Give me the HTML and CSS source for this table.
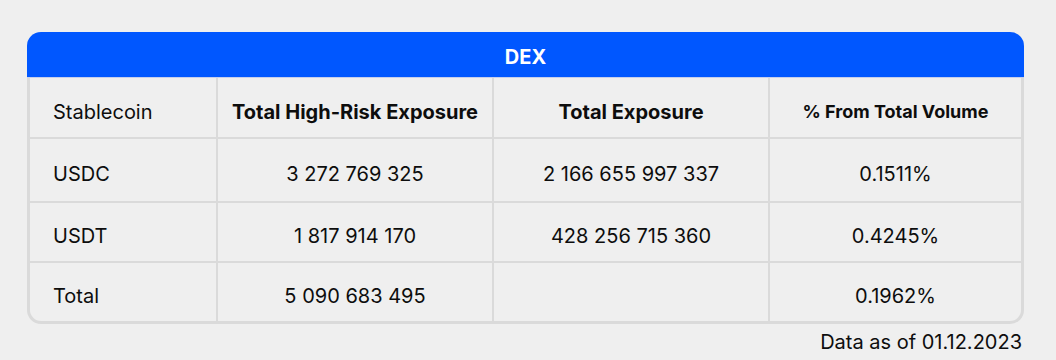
FILE: index.html
```html
<!DOCTYPE html>
<html>
<head>
<meta charset="utf-8">
<link rel="stylesheet" href="styles.css">
</head>
<body>
<div class="wrap">
  <div class="card">
    <div class="card-head">DEX</div>
    <div class="grid">
      <div class="cell left">Stablecoin</div>
      <div class="cell th">Total High-Risk Exposure</div>
      <div class="cell th">Total Exposure</div>
      <div class="cell th small">% From Total Volume</div>

      <div class="cell left">USDC</div>
      <div class="cell">3 272 769 325</div>
      <div class="cell">2 166 655 997 337</div>
      <div class="cell">0.1511%</div>

      <div class="cell left">USDT</div>
      <div class="cell">1 817 914 170</div>
      <div class="cell">428 256 715 360</div>
      <div class="cell">0.4245%</div>

      <div class="cell left bl">Total</div>
      <div class="cell">5 090 683 495</div>
      <div class="cell"></div>
      <div class="cell br">0.1962%</div>
    </div>
  </div>
  <div class="note">Data as of 01.12.2023</div>
</div>
</body>
</html>
```
FILE: styles.css
```css
html, body {
  margin: 0;
  padding: 0;
  background: #efefef;
}
body {
  font-family: Inter, "Noto Sans", sans-serif;
  color: #0d0d0d;
}
.wrap {
  width: 997px;
  padding: 32px 0 0 27px;
}
.card-head {
  height: 46px;
  background: #0057ff;
  border-radius: 14px 14px 0 0;
  border-bottom: 1px solid #c6cfec;
  color: #fff;
  font-weight: 700;
  font-size: 20px;
  display: flex;
  align-items: center;
  justify-content: center;
  padding-top: 4px;
  box-sizing: border-box;
}
.grid {
  display: grid;
  grid-template-columns: 186px 274px 274px 251px;
  grid-template-rows: 59px 62px 58px 58px;
  gap: 2px;
  background: #dadada;
  border: 3px solid #dadada;
  border-top: 0;
  border-radius: 0 0 14px 14px;
}
.cell {
  background: #efefef;
  display: flex;
  align-items: center;
  justify-content: center;
  font-size: 20px;
  padding-top: 8px;
  box-sizing: border-box;
}
.cell.left {
  justify-content: flex-start;
  padding-left: 23px;
}
.th {
  font-weight: 700;
}
.th.small {
  font-size: 18px;
}
.bl { border-bottom-left-radius: 11px; }
.br { border-bottom-right-radius: 11px; }
.note {
  text-align: right;
  font-size: 20px;
  margin-top: 6px;
  margin-right: 2px;
}
```
